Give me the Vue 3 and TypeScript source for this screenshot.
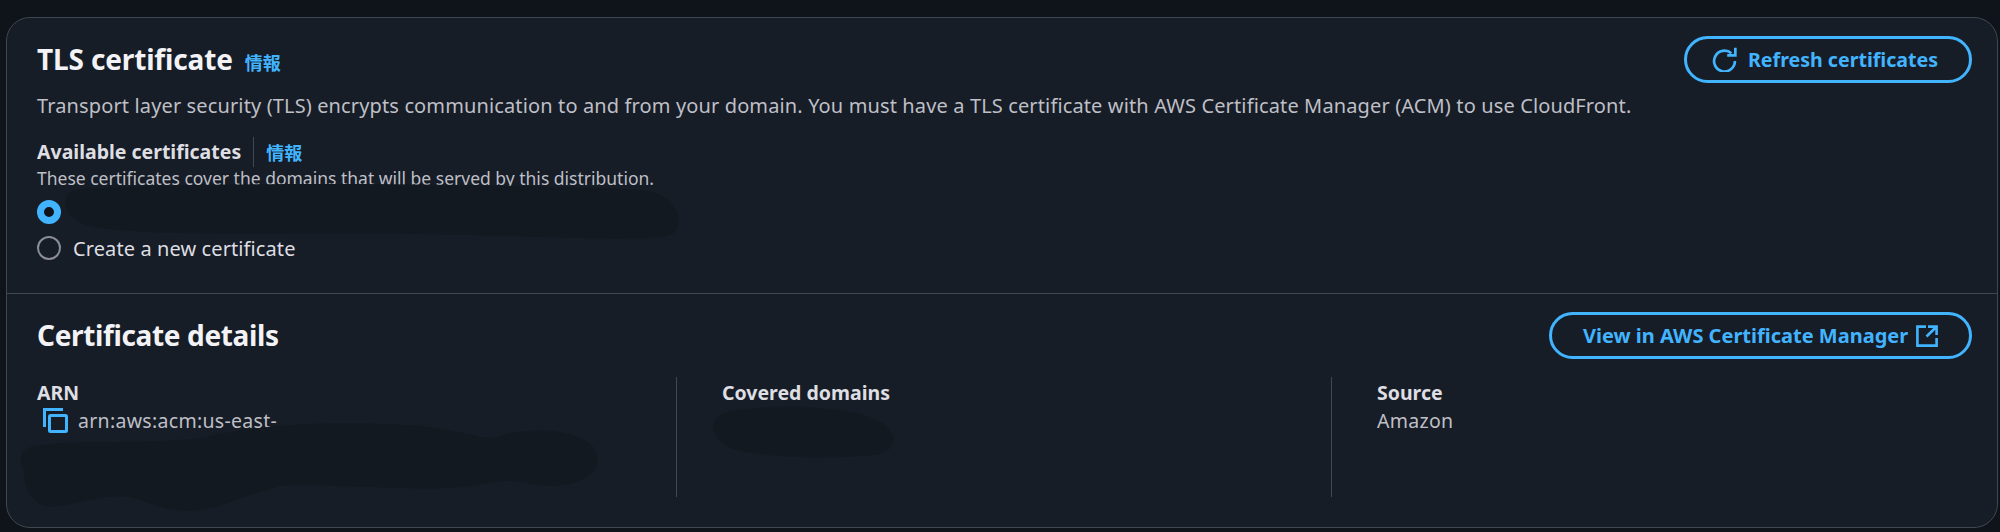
<script setup lang="ts">
const columns = [
  { label: 'ARN', value: 'arn:aws:acm:us-east-', copy: true },
  { label: 'Covered domains', value: '', copy: false },
  { label: 'Source', value: 'Amazon', copy: false },
]
</script>

<template>
  <div class="page">
    <section class="card">
      <div class="top">
        <div class="head">
          <div class="title-wrap">
            <h2 class="title">TLS certificate</h2>
            <a class="info info-title">情報</a>
          </div>
          <button class="btn refresh">
            <svg class="ico" viewBox="0 0 24 24" fill="none" stroke="currentColor" stroke-width="2.6">
              <path d="M22 13.5A10 10 0 1 1 18.6 6" />
              <path d="M22.4 0.6V8H14.6" />
            </svg>
            <span>Refresh certificates</span>
          </button>
        </div>
        <p class="desc">Transport layer security (TLS) encrypts communication to and from your domain. You must have a TLS certificate with AWS Certificate Manager (ACM) to use CloudFront.</p>
        <div class="field-label">
          <span class="label">Available certificates</span>
          <span class="sep"></span>
          <a class="info">情報</a>
        </div>
        <p class="hint">These certificates cover the domains that will be served by this distribution.</p>
        <div class="radio-row first"><span class="radio on"></span></div>
        <div class="radio-row"><span class="radio"></span><span class="radio-text">Create a new certificate</span></div>
      </div>
      <div class="bottom">
        <div class="head second">
          <h3 class="title">Certificate details</h3>
          <button class="btn view">
            <span>View in AWS Certificate Manager</span>
            <svg class="ico ext" viewBox="0 0 22 22" fill="none" stroke="currentColor" stroke-width="2.6">
              <path d="M10 1.6H1.4v19h19.2V13" />
              <path d="M12 1.6h8.6V10M20.2 2 10.5 11.5" />
            </svg>
          </button>
        </div>
        <div class="cols">
          <div v-for="c in columns" :key="c.label" class="col">
            <div class="label">{{ c.label }}</div>
            <div class="val">
              <svg v-if="c.copy" class="copy" viewBox="0 0 25 25" fill="none" stroke="#42b4ff" stroke-width="3">
                <path d="M20 1.5H1.5V19" />
                <rect x="6.5" y="7.5" width="17" height="16" rx="1" />
              </svg>
              <span>{{ c.value }}</span>
            </div>
          </div>
        </div>
      </div>
      <svg class="scribble" viewBox="0 0 2000 532" aria-hidden="true">
        <g fill="#131920">
          <path d="M74 190C170 181 500 183 640 190C680 193 686 226 672 234C650 243 560 236 420 234C300 232 150 238 90 226C62 220 60 196 74 190Z" />
          <path d="M28 448C60 438 130 446 200 438C260 424 340 420 420 426C470 432 490 442 500 436C530 426 590 428 598 456C600 482 560 490 530 484C500 476 490 486 450 488C400 490 340 484 280 486C260 492 240 498 220 506C190 514 170 512 140 500C120 492 100 498 60 506C30 512 22 480 24 470C18 462 20 452 28 448Z" />
          <path d="M722 414C750 404 820 404 860 414C900 424 900 448 880 454C840 460 760 458 730 448C710 438 708 422 722 414Z" />
        </g>
      </svg>
    </section>
  </div>
</template>

<style>
html, body { margin: 0; background: #0f141a; }
</style>

<style scoped>
.page {
  width: 2000px;
  height: 532px;
  box-sizing: border-box;
  padding: 17px 2px 4px 6px;
  background: #0f141a;
  font-family: "Noto Sans", sans-serif;
  overflow: hidden;
}
.card {
  position: relative;
  height: 511px;
  box-sizing: border-box;
  background: #161d26;
  border: 1.5px solid #424650;
  border-radius: 24px;
}
.top {
  height: 276px;
  box-sizing: border-box;
  padding: 18px 25px 0 30px;
  border-bottom: 1.5px solid #424650;
}
.head {
  display: flex;
  justify-content: space-between;
  align-items: flex-start;
}
.title-wrap { display: flex; align-items: baseline; gap: 12px; }
.title {
  margin: 3.5px 0 0;
  font-size: 28px;
  line-height: 38px;
  font-weight: 700;
  color: #f3f3f7;
  letter-spacing: -0.15px;
}
.info {
  font-family: "Noto Sans CJK JP", sans-serif;
  font-size: 18px;
  font-weight: 700;
  color: #42b4ff;
}
.btn {
  display: flex;
  align-items: center;
  justify-content: flex-start;
  height: 47px;
  box-sizing: border-box;
  background: transparent;
  border: 3px solid #42b4ff;
  border-radius: 24px;
  color: #42b4ff;
  font-family: inherit;
  font-weight: 700;
}
.refresh { width: 288px; padding: 0 0 0 25px; gap: 11px; font-size: 19.6px; }
.view { width: 423px; padding: 0 0 0 31px; gap: 8px; font-size: 20px; }
.ico { width: 25px; height: 25px; flex: none; }
.ext { width: 22px; height: 22px; }
.desc {
  margin: 9px 0 0;
  font-size: 20px;
  line-height: 28px;
  color: #bfbfc6;
  letter-spacing: 0.13px;
}
.field-label {
  display: flex;
  align-items: center;
  margin-top: 17px;
  height: 30px;
}
.label {
  font-size: 19.5px;
  line-height: 28px;
  font-weight: 700;
  color: #dedee3;
}
.sep {
  width: 1px;
  height: 30px;
  margin: 0 12px;
  background: #424650;
}
.hint {
  margin: -3px 0 0;
  font-size: 17.5px;
  line-height: 28px;
  color: #bfbfc6;
}
.radio-row {
  display: flex;
  align-items: center;
  gap: 12px;
  height: 24px;
  margin-top: 12px;
}
.radio-row.first { margin-top: 8px; }
.radio {
  width: 24px;
  height: 24px;
  box-sizing: border-box;
  border-radius: 50%;
  border: 2px solid #8c8c94;
}
.radio.on {
  border: 7px solid #42b4ff;
  background: #0f141a;
}
.radio-text {
  font-size: 20px;
  color: #dedee3;
  letter-spacing: 0.1px;
}
.bottom { padding: 18px 25px 0 30px; }
.second .title { margin-top: 4px; letter-spacing: -0.35px; }
.cols {
  display: grid;
  grid-template-columns: 639px 655px 1fr;
  margin-top: 18px;
  height: 120px;
}
.col {
  padding-left: 45px;
  border-left: 1px solid #424650;
}
.col:first-child { padding-left: 0; border-left: none; }
.col .label { margin-top: 1.5px; }
.val {
  display: flex;
  align-items: center;
  gap: 10px;
  font-size: 19.5px;
  line-height: 28px;
  color: #bfbfc6;
  letter-spacing: 0.3px;
}
.copy { width: 25px; height: 25px; margin-left: 6px; flex: none; }
.scribble {
  position: absolute;
  left: -7.5px;
  top: -18.5px;
  width: 2000px;
  height: 532px;
  pointer-events: none;
}
</style>
